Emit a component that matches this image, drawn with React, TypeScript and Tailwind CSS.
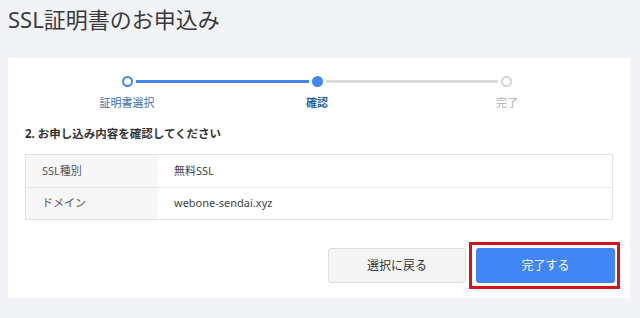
import { Fragment } from 'react'

const font = {
  fontFamily: '"Noto Sans", "Noto Sans CJK JP", sans-serif',
}

type StepState = 'done' | 'current' | 'todo'

const steps: { label: string; state: StepState }[] = [
  { label: '証明書選択', state: 'done' },
  { label: '確認', state: 'current' },
  { label: '完了', state: 'todo' },
]

const rows = [
  { label: 'SSL種別', value: '無料SSL' },
  { label: 'ドメイン', value: 'webone-sendai.xyz' },
]

function Dot({ state }: { state: StepState }) {
  if (state === 'current') {
    return <div className="w-[11px] h-[11px] rounded-full bg-[#4285f4] shrink-0" />
  }
  return (
    <div
      className={
        state === 'done'
          ? 'w-[11px] h-[11px] rounded-full border-[2.5px] border-[#4285f4] bg-white shrink-0'
          : 'w-[11px] h-[11px] rounded-full border-[2.5px] border-[#d4d4d4] bg-white shrink-0'
      }
    />
  )
}

function Stepper() {
  return (
    <div className="w-[570px] ml-[24px]">
      {/* dots + connectors */}
      <div className="flex items-center px-[90px]">
        {steps.map((s, i) => (
          <Fragment key={s.label}>
            {i > 0 && (
              <div
                className={
                  steps[i].state === 'todo'
                    ? 'flex-1 h-[3px] mx-[3px] bg-[#dcdcdc]'
                    : 'flex-1 h-[3px] mx-[3px] bg-[#4285f4]'
                }
              />
            )}
            <Dot state={s.state} />
          </Fragment>
        ))}
      </div>
      {/* labels */}
      <div className="grid grid-cols-3 mt-[8px] text-[11px] leading-[16px] text-center">
        {steps.map((s) => (
          <div
            key={s.label}
            className={
              s.state === 'current'
                ? 'font-bold text-[#2c5fa3]'
                : s.state === 'done'
                  ? 'text-[#3b6cae]'
                  : 'text-[#b0b0b0]'
            }
          >
            {s.label}
          </div>
        ))}
      </div>
    </div>
  )
}

export default function App() {
  return (
    <div className="w-[640px] h-[318px] bg-[#f1f3f6] pt-[3px]" style={font}>
      <h1 className="pl-2 text-[22px] leading-[32px] text-[#3a3a3a]">
        SSL証明書のお申込み
      </h1>

      <div className="mt-[23px] ml-2 w-[622px] bg-white pt-[18px] pb-[15px] px-[17px]">
        <div className="-ml-[17px]">
          <Stepper />
        </div>

        <h2 className="mt-[14px] text-[11.5px] leading-[18px] font-bold text-[#333]">
          2. お申し込み内容を確認してください
        </h2>

        {/* Summary table */}
        <div className="mt-[11px] border border-[#e2e2e2] text-[11px] text-[#444]">
          {rows.map((r, i) => (
            <div
              key={r.label}
              className={i > 0 ? 'flex h-[32px] border-t border-[#e8e8e8]' : 'flex h-[32px]'}
            >
              <div className="w-[132px] bg-[#f7f7f7] flex items-center pl-[16px] text-[#555]">
                {r.label}
              </div>
              <div className="flex-1 flex items-center pl-[16px]">{r.value}</div>
            </div>
          ))}
        </div>

        {/* Actions */}
        <div className="mt-[28px] flex justify-end gap-[10px] -mr-[2px]">
          <button className="w-[138px] h-[35px] rounded-[3px] bg-[#f5f5f5] border border-[#dedede] text-[12px] text-[#333]">
            選択に戻る
          </button>
          <div className="relative">
            <button className="w-[139px] h-[35px] rounded-[3px] bg-[#4285f4] text-[12px] text-white">
              完了する
            </button>
            <div className="absolute -top-[6px] -bottom-[6px] -left-[7px] -right-[5px] border-[3px] border-[#d3141c] pointer-events-none" />
          </div>
        </div>
      </div>
    </div>
  )
}
